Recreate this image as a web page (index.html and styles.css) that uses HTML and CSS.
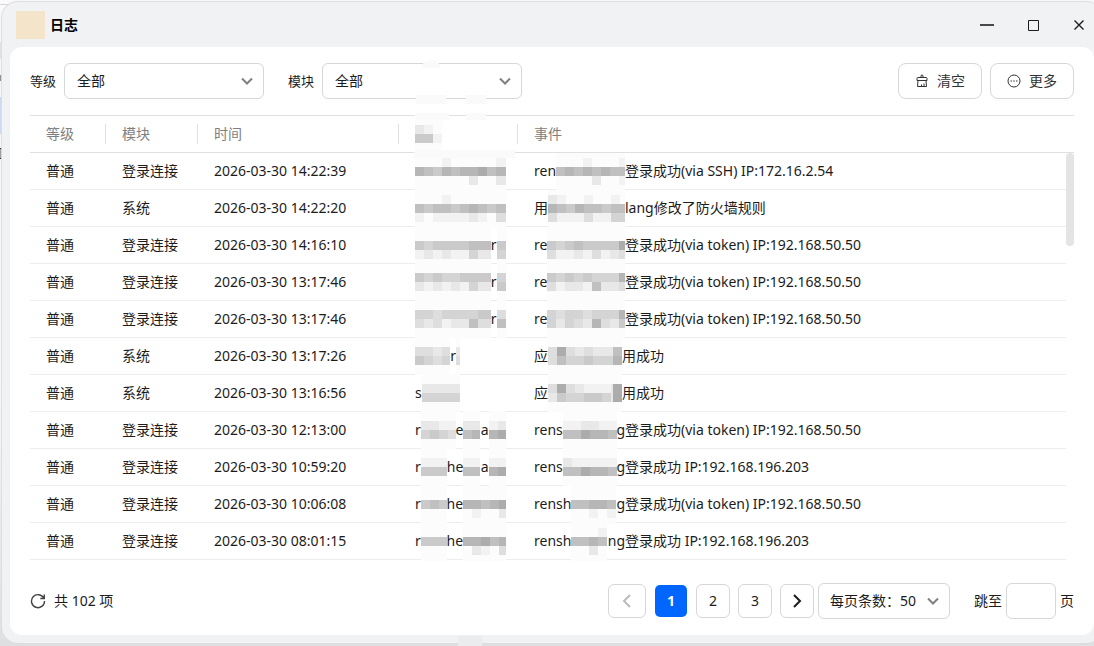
FILE: index.html
```html
<!DOCTYPE html>
<html lang="zh-CN">
<head>
    <meta charset="UTF-8">
    <meta name="viewport" content="width=device-width, initial-scale=1.0">
    <title>日志</title>
    <link rel="stylesheet" href="styles.css">
</head>
<body>
    <div class="window">
        <header class="titlebar">
            <span class="app-icon"></span>
            <h1>日志</h1>
            <div class="window-buttons">
                <button type="button" aria-label="最小化"><svg width="14" height="14" viewBox="0 0 14 14"><path d="M0 7h14" stroke-width="1.6"/></svg></button>
                <button type="button" aria-label="最大化"><svg width="14" height="14" viewBox="0 0 14 14"><path d="M2.500 2.500h10v10h-10z"/></svg></button>
                <button type="button" aria-label="关闭"><svg width="14" height="14" viewBox="0 0 14 14"><path d="M2.500 2.500l9 9M11.500 2.500l-9 9" stroke-width="1.4"/></svg></button>
            </div>
        </header>

        <main class="panel">
            <div class="toolbar">
                <label for="level">等级</label>
                <div class="select">
                    <select id="level"><option>全部</option></select>
                    <svg width="12" height="12" viewBox="0 0 12 12"><path d="M1 3.500l5 5 5-5"/></svg>
                </div>
                <label for="module">模块</label>
                <div class="select">
                    <select id="module"><option>全部</option></select>
                    <svg width="12" height="12" viewBox="0 0 12 12"><path d="M1 3.500l5 5 5-5"/></svg>
                </div>
                <div class="actions">
                    <button type="button">
                        <svg width="14" height="14" viewBox="0 0 14 14"><path d="M6 3.500V1.500Q7 .5 8 1.500V3.500M2 6.500V4.500Q2 3.500 3 3.500H11Q12 3.500 12 4.500V6.500ZM3 6.500L2.500 12.500H11.500L11 6.500M6.500 12.500V10.500M9 12.500V9.500"/></svg>
                        清空
                    </button>
                    <button type="button">
                        <svg width="14" height="14" viewBox="0 0 14 14"><circle cx="7" cy="7" r="6"/><path d="M3.500 7h1.500M6.250 7h1.500M9 7h1.500"/></svg>
                        更多
                    </button>
                </div>
            </div>

            <table>
                <thead>
                    <tr>
                        <th class="col-level">等级</th>
                        <th class="col-module">模块</th>
                        <th class="col-time">时间</th>
                        <th class="col-user"><span class="mosaic" data-rows="210 551"></span></th>
                        <th>事件</th>
                        <th class="col-rail"></th>
                    </tr>
                </thead>
                <tbody>
                    <tr>
                        <td>普通</td><td>登录连接</td><td>2026-03-30 14:22:39</td>
                        <td><span class="user"><span class="mosaic" data-rows="0001000001 7657677867 0000002002"></span></span></td>
                        <td><span class="name">ren<span class="mosaic" data-rows="00010001 67676766 00002001"></span></span>登录成功(via SSH) IP:172.16.2.54</td>
                        <td class="rail" rowspan="11"><div class="thumb"></div></td>
                    </tr>
                    <tr>
                        <td>普通</td><td>系统</td><td>2026-03-30 14:22:20</td>
                        <td><span class="user"><span class="mosaic" data-rows="0001000000 6566567656 1011112103"></span></span></td>
                        <td><span class="name">用<span class="mosaic" data-rows="210010010 765766566 311131144"></span></span>lang修改了防火墙规则</td>
                    </tr>
                    <tr>
                        <td>普通</td><td>登录连接</td><td>2026-03-30 14:16:10</td>
                        <td><span class="user"><span class="mosaic" data-rows="00000000 54555566 12121142"></span>r<span class="mosaic" data-rows="0 5 4"></span></span></td>
                        <td><span class="name">re<span class="mosaic" data-rows="000000000 545655558 311213123"></span></span>登录成功(via token) IP:192.168.50.50</td>
                    </tr>
                    <tr>
                        <td>普通</td><td>登录连接</td><td>2026-03-30 13:17:46</td>
                        <td><span class="user"><span class="mosaic" data-rows="54544555 21212142"></span>r<span class="mosaic" data-rows="4 5"></span></span></td>
                        <td><span class="name">re<span class="mosaic" data-rows="545454447 312216223"></span></span>登录成功(via token) IP:192.168.50.50</td>
                    </tr>
                    <tr>
                        <td>普通</td><td>登录连接</td><td>2026-03-30 13:17:46</td>
                        <td><span class="user"><span class="mosaic" data-rows="44344445 32312263"></span>r<span class="mosaic" data-rows="3 6"></span></span></td>
                        <td><span class="name">re<span class="mosaic" data-rows="434434447 424327325"></span></span>登录成功(via token) IP:192.168.50.50</td>
                    </tr>
                    <tr>
                        <td>普通</td><td>系统</td><td>2026-03-30 13:17:26</td>
                        <td><span class="user short"><span class="mosaic" data-rows="3323 5434"></span>r<span class="mosaic sliver" data-rows="2 3"></span></span></td>
                        <td><span class="name app">应<span class="mosaic" data-rows="38323222 36445444"></span><span class="mosaic sliver" data-rows="6 7"></span></span>用成功</td>
                    </tr>
                    <tr>
                        <td>普通</td><td>系统</td><td>2026-03-30 13:16:56</td>
                        <td><span class="user short">s<span class="mosaic" data-rows="2222 4444"></span></span></td>
                        <td><span class="name app">应<span class="mosaic" data-rows="38321112 25445542"></span><span class="mosaic sliver" data-rows="8 8"></span></span>用成功</td>
                    </tr>
                    <tr>
                        <td>普通</td><td>登录连接</td><td>2026-03-30 12:13:00</td>
                        <td><span class="user">r<span class="mosaic" data-rows="2211 4543"></span>e<span class="mosaic" data-rows="22 67"></span>a<span class="mosaic" data-rows="12 78"></span></span></td>
                        <td><span class="name">rens<span class="mosaic" data-rows="1122112 6687767"></span>g</span>登录成功(via token) IP:192.168.50.50</td>
                    </tr>
                    <tr>
                        <td>普通</td><td>登录连接</td><td>2026-03-30 10:59:20</td>
                        <td><span class="user">r<span class="mosaic" data-rows="111 555"></span>he<span class="mosaic" data-rows="11 66"></span>a<span class="mosaic" data-rows="11 78"></span></span></td>
                        <td><span class="name">rens<span class="mosaic" data-rows="2111111 6687767"></span>g</span>登录成功 IP:192.168.196.203</td>
                    </tr>
                    <tr>
                        <td>普通</td><td>登录连接</td><td>2026-03-30 10:06:08</td>
                        <td><span class="user">r<span class="mosaic" data-rows="000 565 000"></span>he<span class="mosaic" data-rows="00000 77678 01002"></span></span></td>
                        <td><span class="name">rensh<span class="mosaic" data-rows="000000 667767 001010"></span>g</span>登录成功(via token) IP:192.168.50.50</td>
                    </tr>
                    <tr>
                        <td>普通</td><td>登录连接</td><td>2026-03-30 08:01:15</td>
                        <td><span class="user">r<span class="mosaic" data-rows="000 555 000"></span>he<span class="mosaic" data-rows="00000 77867 02103"></span></span></td>
                        <td><span class="name">rensh<span class="mosaic" data-rows="00010 66766 00201"></span>ng</span>登录成功 IP:192.168.196.203</td>
                    </tr>
                </tbody>
            </table>

            <footer class="pager">
                <button type="button" class="refresh" aria-label="刷新"><svg width="16" height="16" viewBox="0 0 16 16"><path d="M13.800 5.200A6.500 6.500 0 1 0 14.500 8M14.300 1.500v4h-4"/></svg></button>
                <span class="total">共 102 项</span>
                <nav class="pages">
                    <button type="button" class="page prev" aria-label="上一页" disabled><svg width="16" height="16" viewBox="0 0 16 16"><path d="M11 2L5 8l6 6"/></svg></button>
                    <button type="button" class="page current">1</button>
                    <button type="button" class="page">2</button>
                    <button type="button" class="page">3</button>
                    <button type="button" class="page next" aria-label="下一页"><svg width="16" height="16" viewBox="0 0 16 16"><path d="M5 2l6 6-6 6"/></svg></button>
                </nav>
                <div class="select page-size">
                    <select aria-label="每页条数"><option>每页条数：50</option></select>
                    <svg width="12" height="12" viewBox="0 0 12 12"><path d="M1 3.500l5 5 5-5"/></svg>
                </div>
                <label class="jump">跳至 <input type="text"> 页</label>
            </footer>
        </main>
    </div>
    <svg class="smudges" width="120" height="586" viewBox="0 0 120 586">
        <path d="M11 8q2-8 10-8t10 8zM6 35h30v9H6zM56 35h20v9H56zM6 53h33v7H6zM56 53h20v7H56zM5 90h100v8H3z"/>
        <path fill="#ebecee" d="M48 576h24v10H48z"/>
    </svg>

    <script src="mosaic.js"></script>
</body>
</html>
```
FILE: styles.css
```css
* {
    box-sizing: border-box;
}

/* edges of the desktop behind the window */
body {
    margin: 0;
    height: 100vh;
    padding: 2px 0 3px 2px;
    display: flex;
    overflow: hidden;
    background:
        linear-gradient(transparent 42px, #e2e3e4 42px, #e2e3e4 59px, transparent 59px, transparent 75px, #8a8a8a 75px, #8a8a8a 81px, transparent 81px, transparent 97px, #cbd9f3 97px, #cbd9f3 134px, transparent 134px, transparent 148px, #222 148px, #222 149px, #999 149px, #999 158px, #222 158px, #222 159px, transparent 159px) left top / 2px 100% no-repeat,
        linear-gradient(#d8d8d8, #d8d8d8) 0 4px / 12px 1px no-repeat,
        linear-gradient(#fafafa 60%, #dedfe1);
    color: #1c1c1c;
    font-family: "Noto Sans", "Noto Sans CJK SC", sans-serif;
    font-size: 14px;
    line-height: 20px;
}

button, select, input {
    font: inherit;
    color: inherit;
    margin: 0;
}

svg {
    fill: none;
    stroke: currentColor;
}

/* the window runs a little past the right edge of the screen */
.window {
    flex: 1;
    margin-right: -8px;
    padding: 0 8px 8px;
    display: flex;
    flex-direction: column;
    background: #f1f2f4;
    border-radius: 16px;
    box-shadow: 0 0 1px 1px #dcdde0;
}

.titlebar {
    height: 45px;
    flex: none;
    display: flex;
    align-items: center;
    padding: 0 0 0 6px;
}

.app-icon {
    width: 29px;
    height: 28px;
    background: #f4e5ca;
}

h1 {
    margin: 0 0 0 5px;
    font-size: 14px;
    font-weight: bold;
    color: #000;
}

.window-buttons {
    margin-left: auto;
    margin-right: -8px;
    display: flex;
}

.window-buttons button {
    width: 46px;
    height: 40px;
    padding: 0;
    border: 0;
    background: none;
    display: grid;
    place-items: center;
}

.panel {
    flex: 1;
    display: flex;
    flex-direction: column;
    padding: 16px 20px;
    background: #fff;
    border-radius: 12px;
}

.toolbar {
    display: flex;
    align-items: center;
    gap: 8px;
    margin-bottom: 16px;
}

.toolbar label {
    font-size: 13px;
}

.toolbar .select + label {
    margin-left: 16px;
}

.select {
    display: grid;
    align-items: center;
    width: 200px;
}

.select select {
    grid-area: 1 / 1;
    width: 100%;
    height: 36px;
    padding: 0 12px;
    appearance: none;
    background: #fff;
    border: 1px solid #d6d7d9;
    border-radius: 6px;
}

.select svg {
    grid-area: 1 / 1;
    justify-self: end;
    margin-right: 11px;
    color: #808080;
    stroke-width: 2;
    pointer-events: none;
}

.actions {
    margin-left: auto;
    display: flex;
    gap: 8px;
}

.actions button {
    width: 84px;
    height: 36px;
    padding: 0;
    display: flex;
    align-items: center;
    justify-content: center;
    gap: 8px;
    background: #fff;
    border: 1px solid #d6d7d9;
    border-radius: 8px;
    color: #333;
}

table {
    width: 100%;
    table-layout: fixed;
    border-collapse: separate;
    border-spacing: 0;
}

th, td {
    height: 37px;
    padding: 0 0 0 16px;
    text-align: left;
    white-space: nowrap;
    border-bottom: 1px solid #ededee;
}

th {
    height: 38px;
    font-weight: normal;
    color: #808080;
    border-top: 1px solid #dfe0e1;
    border-bottom-color: #dfe0e1;
    background: linear-gradient(#dfe0e1, #dfe0e1) right center / 1px 20px no-repeat;
}

th:nth-last-child(-n+2) {
    background: none;
}

.col-level {
    width: 76px;
}

.col-module {
    width: 92px;
}

.col-time {
    width: 201px;
}

.col-user {
    width: 119px;
}

.col-rail {
    width: 8px;
    padding: 0;
}

.rail {
    padding: 0;
    border: 0;
    vertical-align: top;
}

.thumb {
    height: 93px;
    border-radius: 4px;
    background: #e3e5e5;
}

/* masked names */
.user, .name {
    display: flex;
    align-items: center;
    height: 20px;
    width: 91px;
}

.name {
    display: inline-flex;
    vertical-align: top;
}

.user.short {
    width: 45px;
}

.name.app {
    width: 88px;
}

.mosaic {
    flex: 1 1 0;
    min-width: 0;
    display: flex;
}

th .mosaic {
    width: 27px;
}

.mosaic.sliver {
    flex: none;
    width: 9px;
}

.short .sliver {
    width: 4px;
}

.mosaic svg {
    display: block;
    width: 100%;
    stroke: none;
    overflow: visible;
}

.smudges {
    position: absolute;
    left: 410px;
    top: 60px;
    fill: #fafafa;
    stroke: none;
    pointer-events: none;
}

.pager {
    margin-top: auto;
    display: flex;
    align-items: center;
}

.refresh {
    padding: 0;
    border: 0;
    background: none;
    display: flex;
    color: #444;
}

.refresh svg {
    stroke-width: 1.4;
}

.total {
    margin-left: 8px;
}

.pages {
    margin-left: auto;
    margin-right: 4px;
    display: flex;
    gap: 8px;
}

.page {
    width: 34px;
    height: 34px;
    padding: 0;
    display: grid;
    place-items: center;
    background: #fff;
    border: 1px solid #d6d7d9;
    border-radius: 6px;
}

.page svg {
    stroke-width: 2;
}

.prev {
    width: 38px;
    color: #bbb;
}

.current {
    background: #0066ff;
    background-clip: padding-box;
    border-color: transparent;
    color: #fff;
    font-weight: bold;
}

.page-size {
    width: 132px;
}

.page-size select {
    padding: 0 0 0 11px;
}

.jump {
    margin-left: 24px;
    display: flex;
    align-items: center;
    gap: 4px;
}

.jump input {
    width: 50px;
    height: 36px;
    padding: 0 8px;
    border: 1px solid #d6d7d9;
    border-radius: 6px;
}
```
FILE: mosaic.js
```js
// draws the grey blocks over masked names, one digit per 9px block (0 = lightest)
const NS = 'http://www.w3.org/2000/svg';
const SIZE = 9;
const boxes = document.querySelectorAll('.mosaic');

function addRect(svg, x, y, width, height, fill) {
    const rect = document.createElementNS(NS, 'rect');
    rect.setAttribute('x', x);
    rect.setAttribute('y', y);
    rect.setAttribute('width', width);
    rect.setAttribute('height', height);
    rect.setAttribute('fill', fill);
    svg.appendChild(rect);
}

// wider masks take a bigger share of the name
boxes.forEach(box => {
    if (!box.classList.contains('sliver')) {
        box.style.flexGrow = box.dataset.rows.split(' ')[0].length;
    }
});

boxes.forEach(box => {
    const rows = box.dataset.rows.split(' ');
    const total = box.clientWidth;
    const height = rows.length * SIZE;
    const svg = document.createElementNS(NS, 'svg');
    svg.setAttribute('height', height);
    svg.setAttribute('shape-rendering', 'crispEdges');
    addRect(svg, 0, (height - 38) / 2, total, 38, '#fcfcfc');
    rows.forEach((row, y) => {
        [...row].forEach((digit, x) => {
            const width = x === row.length - 1 ? total - x * SIZE : Math.min(SIZE, total - x * SIZE);
            const grey = 252 - Number(digit) * 10;
            if (width > 0) {
                addRect(svg, x * SIZE, y * SIZE, width, SIZE, `rgb(${grey}, ${grey}, ${grey})`);
            }
        });
    });
    box.appendChild(svg);
});
```
